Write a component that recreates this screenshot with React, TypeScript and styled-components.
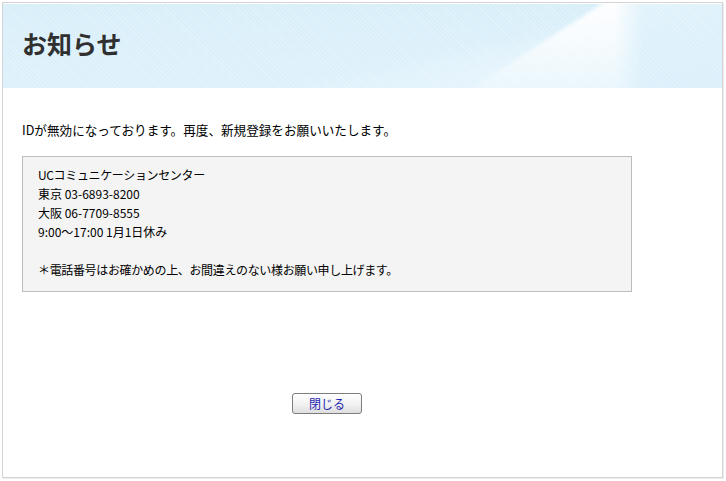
import React from 'react'
import styled, { createGlobalStyle } from 'styled-components'

const GlobalStyle = createGlobalStyle`
  html, body {
    margin: 0;
    padding: 0;
    background: #ffffff;
  }
  body {
    font-family: "Noto Sans CJK JP", "Noto Sans", sans-serif;
    font-size: 12px;
    color: #000;
  }
`

const Frame = styled.div`
  box-sizing: border-box;
  margin: 2px 3px 3px 2px;
  height: 476px;
  border: 1px solid #d4d4d4;
  box-shadow: 1px 1px 0 #ececec;
  background: #fff;
  display: flex;
  flex-direction: column;
`

const Header = styled.div`
  box-sizing: border-box;
  margin-top: 1px;
  height: 84px;
  padding: 27px 0 0 19px;
  background:
    repeating-linear-gradient(45deg, rgba(255, 255, 255, 0.22) 0 1px, transparent 1px 3px),
    linear-gradient(to bottom, rgba(214, 238, 250, 0) 0, rgba(214, 238, 250, 0.5) 100%),
    linear-gradient(90deg, transparent 0 85%, rgba(219, 240, 250, 0.85) 89%, rgba(219, 240, 250, 0.9) 100%),
    linear-gradient(147deg, transparent 0 70%, rgba(255, 255, 255, 0.97) 71.2%, rgba(255, 255, 255, 0.9) 100%),
    linear-gradient(168deg, transparent 0 58%, rgba(255, 255, 255, 0.5) 74%, transparent 92%),
    linear-gradient(to bottom, #d7eef9 0%, #e2f3fb 100%);
`

const Title = styled.h1`
  margin: 0;
  font-family: "Noto Sans CJK JP", "Noto Sans", sans-serif;
  font-size: 25px;
  line-height: 25px;
  font-weight: 700;
  color: #303030;
`

const Content = styled.div`
  width: 610px;
  padding: 32px 0 0 19px;
  display: flex;
  flex-direction: column;
`

const Message = styled.p`
  margin: 0;
  font-size: 12.6px;
  line-height: 19px;
`

const InfoBox = styled.div`
  box-sizing: border-box;
  margin-top: 17px;
  width: 610px;
  height: 136px;
  padding: 8px 15px 12px;
  background: #f4f4f4;
  border: 1px solid #bcbcbc;
`

const Line = styled.div<{ $tight?: boolean }>`
  line-height: 19px;
  height: 19px;
  white-space: pre;
  letter-spacing: ${({ $tight }) => ($tight ? '-0.35px' : '0')};
`

const Actions = styled.div`
  margin-top: 101px;
  display: flex;
  justify-content: center;
`

const CloseButton = styled.button`
  box-sizing: border-box;
  width: 70px;
  height: 21px;
  padding: 0;
  border: 1px solid #7d7d7d;
  border-radius: 3px;
  background: linear-gradient(to bottom, #ffffff 0%, #f1f1f1 55%, #dedede 100%);
  font-family: "Noto Sans CJK JP", "Noto Sans", sans-serif;
  font-size: 12px;
  line-height: 19px;
  color: #1f1fb0;
  cursor: pointer;
`

const lines = [
  { text: 'UCコミュニケーションセンター', tight: true },
  { text: '東京 03-6893-8200' },
  { text: '大阪 06-7709-8555' },
  { text: '9:00～17:00 1月1日休み' },
  { text: '' },
  { text: '＊電話番号はお確かめの上、お間違えのない様お願い申し上げます。', tight: true },
]

const App: React.FC = () => {
  return (
    <>
      <GlobalStyle />
      <Frame>
        <Header>
          <Title>お知らせ</Title>
        </Header>
        <Content>
          <Message>IDが無効になっております。再度、新規登録をお願いいたします。</Message>
          <InfoBox>
            {lines.map((line, i) => (
              <Line key={i} $tight={line.tight}>
                {line.text}
              </Line>
            ))}
          </InfoBox>
          <Actions>
            <CloseButton type="button">閉じる</CloseButton>
          </Actions>
        </Content>
      </Frame>
    </>
  )
}

export default App
